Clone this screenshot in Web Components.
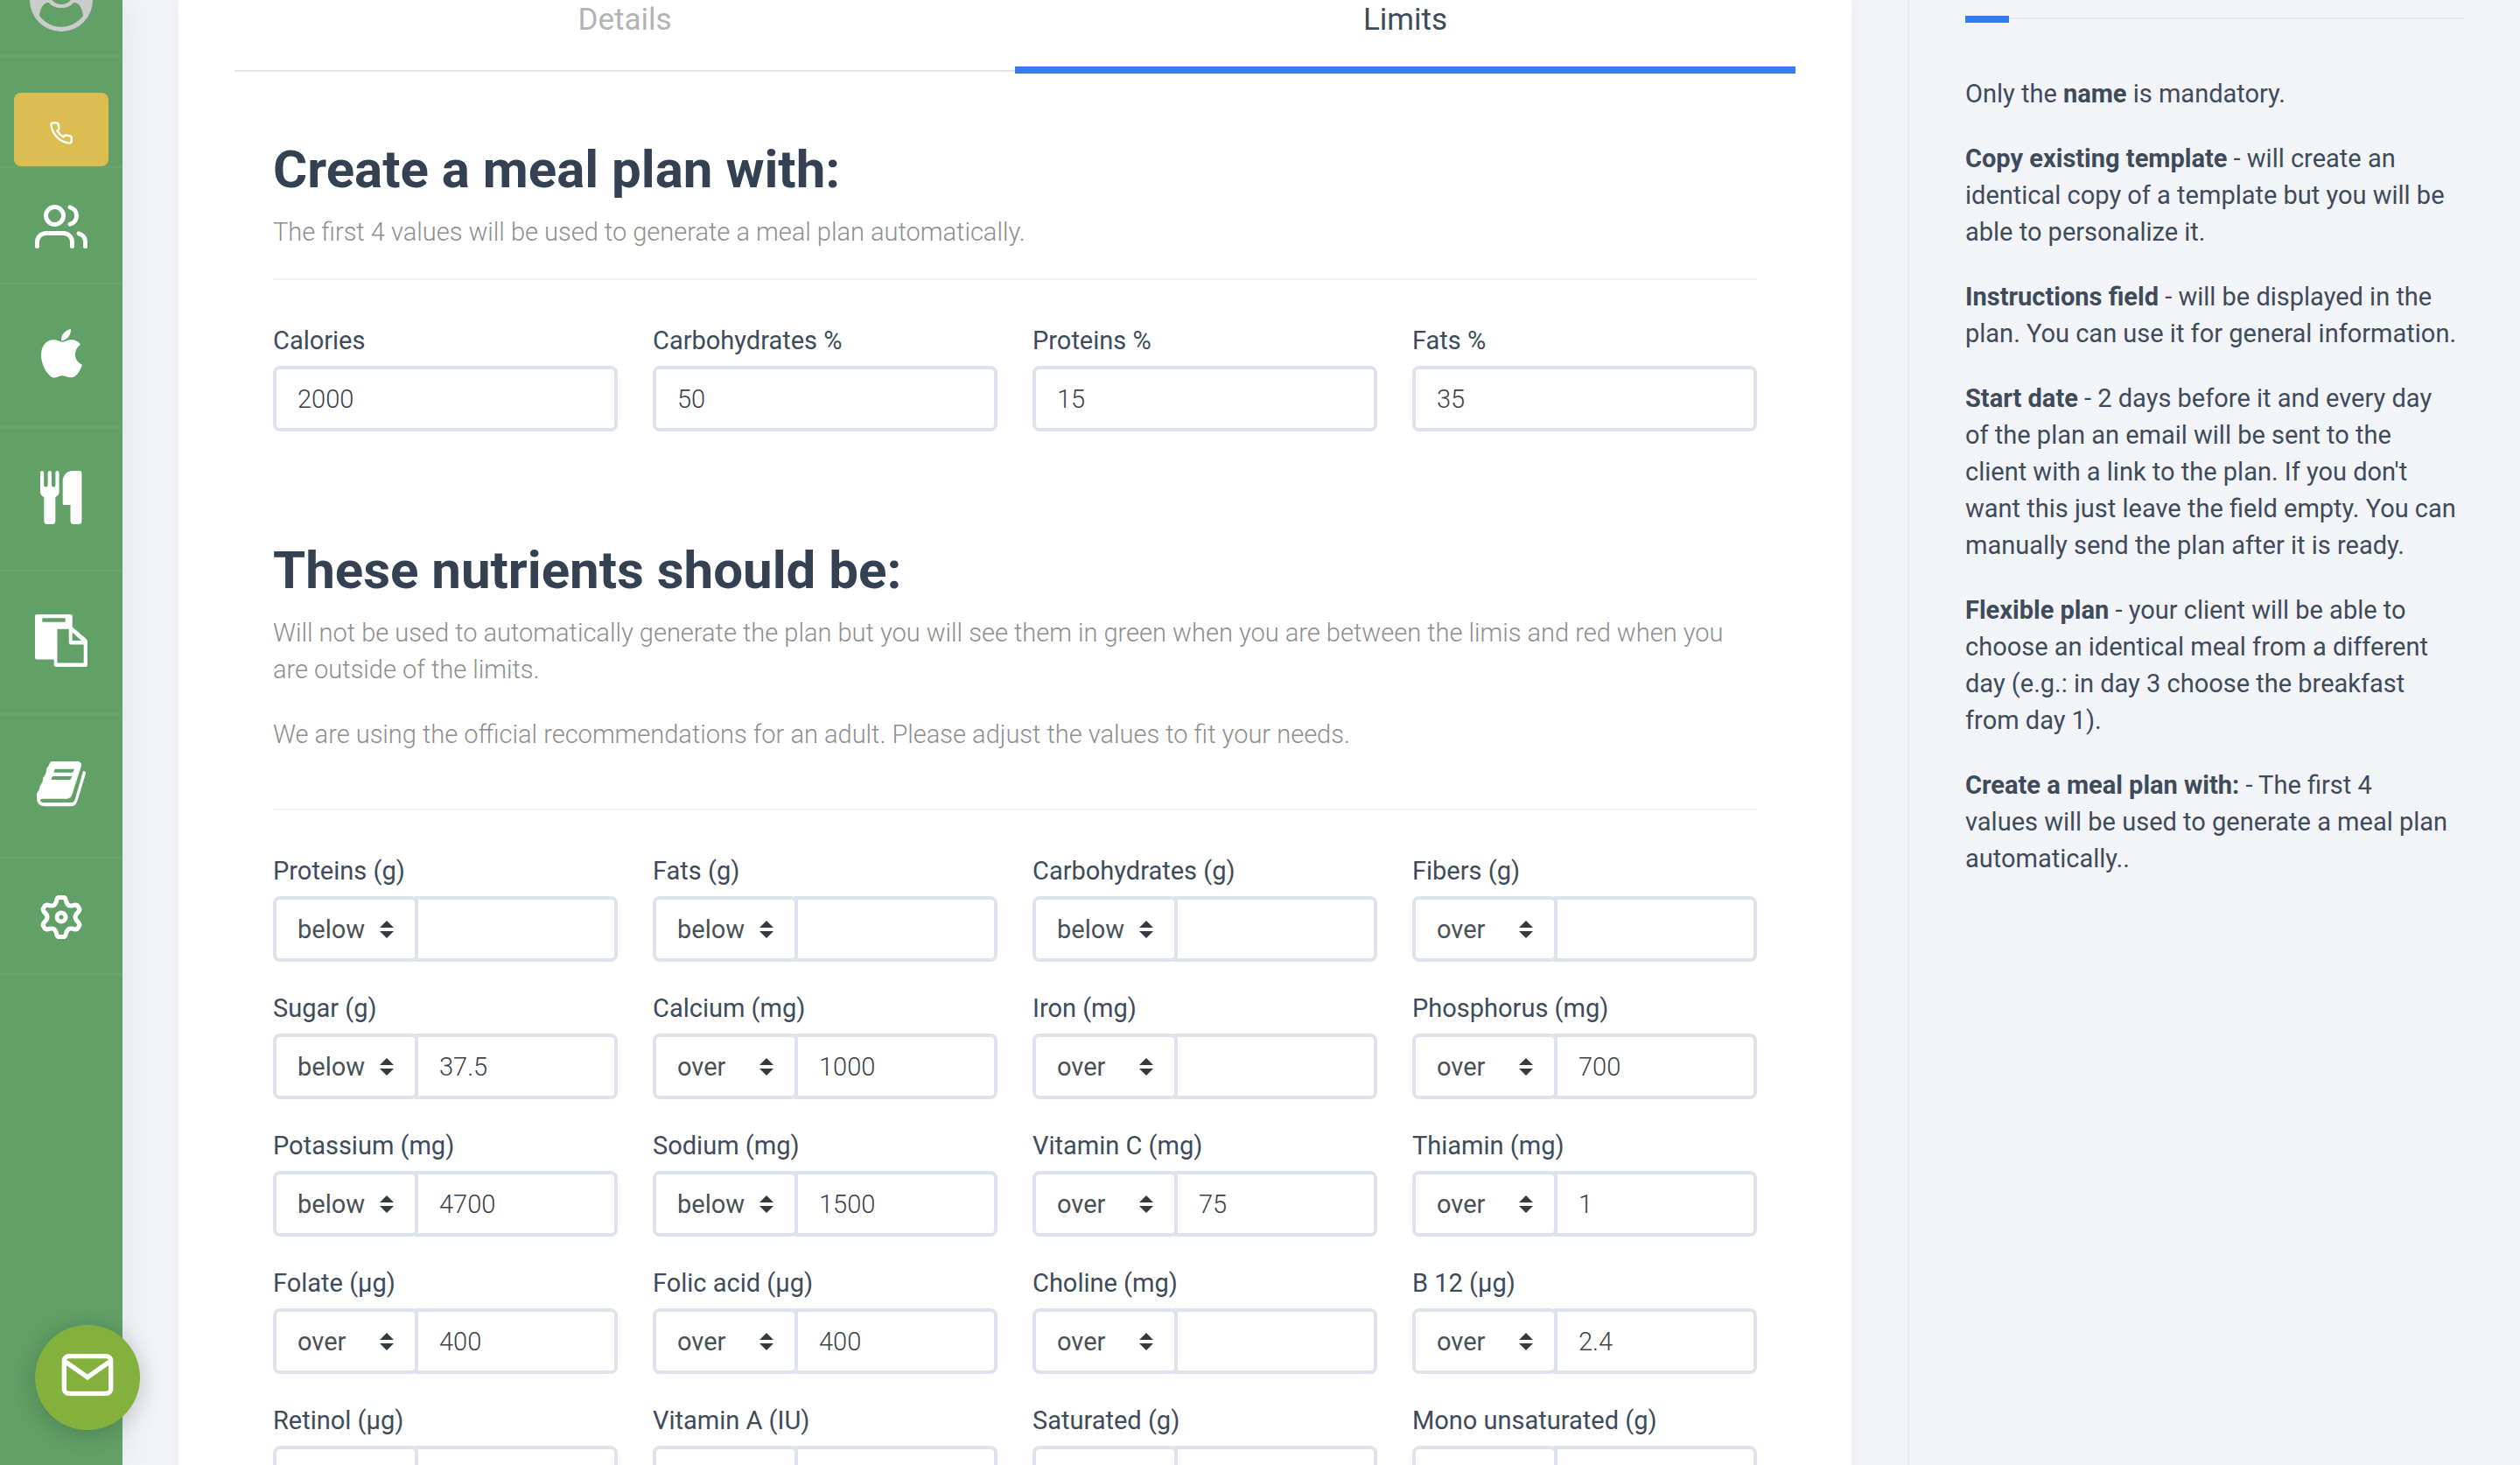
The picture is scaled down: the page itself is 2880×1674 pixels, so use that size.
<!DOCTYPE html>
<html lang="en">
<head>
<meta charset="utf-8">
<title>Meal plan limits</title>
<style>
  body { margin: 0; background: #f3f4f8; color: #3e4b5b; font: 400 29px/42px Roboto, "Liberation Sans", sans-serif; }
</style>
</head>
<body>
<plan-app>
  <side-menu slot="menu"></side-menu>
  <plan-card>
    <form-section heading="Create a meal plan with:">
      <p slot="intro">The first 4 values will be used to generate a meal plan automatically.</p>
      <value-field label="Calories" value="2000"></value-field>
      <value-field label="Carbohydrates %" value="50"></value-field>
      <value-field label="Proteins %" value="15"></value-field>
      <value-field label="Fats %" value="35"></value-field>
    </form-section>
    <form-section heading="These nutrients should be:" spaced>
      <p slot="intro">Will not be used to automatically generate the plan but you will see them in green when you are between the limis and red when you are outside of the limits.</p>
      <p slot="intro">We are using the official recommendations for an adult. Please adjust the values to fit your needs.</p>
      <limit-field label="Proteins (g)" rule="below"></limit-field>
      <limit-field label="Fats (g)" rule="below"></limit-field>
      <limit-field label="Carbohydrates (g)" rule="below"></limit-field>
      <limit-field label="Fibers (g)" rule="over"></limit-field>
      <limit-field label="Sugar (g)" rule="below" value="37.5"></limit-field>
      <limit-field label="Calcium (mg)" rule="over" value="1000"></limit-field>
      <limit-field label="Iron (mg)" rule="over"></limit-field>
      <limit-field label="Phosphorus (mg)" rule="over" value="700"></limit-field>
      <limit-field label="Potassium (mg)" rule="below" value="4700"></limit-field>
      <limit-field label="Sodium (mg)" rule="below" value="1500"></limit-field>
      <limit-field label="Vitamin C (mg)" rule="over" value="75"></limit-field>
      <limit-field label="Thiamin (mg)" rule="over" value="1"></limit-field>
      <limit-field label="Folate (µg)" rule="over" value="400"></limit-field>
      <limit-field label="Folic acid (µg)" rule="over" value="400"></limit-field>
      <limit-field label="Choline (mg)" rule="over"></limit-field>
      <limit-field label="B 12 (µg)" rule="over" value="2.4"></limit-field>
      <limit-field label="Retinol (µg)" rule="over"></limit-field>
      <limit-field label="Vitamin A (IU)" rule="over"></limit-field>
      <limit-field label="Saturated (g)" rule="below"></limit-field>
      <limit-field label="Mono unsaturated (g)" rule="over"></limit-field>
    </form-section>
  </plan-card>
  <help-panel slot="help">
    <p>Only the <b>name</b> is mandatory.</p>
    <p><b>Copy existing template</b> - will create an identical copy of a template but you will be able to personalize it.</p>
    <p><b>Instructions field</b> - will be displayed in the plan. You can use it for general information.</p>
    <p><b>Start date</b> - 2 days before it and every day<br>of the plan an email will be sent to the<br>client with a link to the plan. If you don't<br>want this just leave the field empty. You can manually send the plan after it is ready.</p>
    <p><b>Flexible plan</b> - your client will be able to choose an identical meal from a different day (e.g.: in day 3 choose the breakfast from day 1).</p>
    <p><b>Create a meal plan with:</b> - The first 4<br>values will be used to generate a meal plan automatically..</p>
  </help-panel>
  <mail-button slot="chat"></mail-button>
</plan-app>

<script>
class Base extends HTMLElement {
  connectedCallback() {
    if (this.shadowRoot) return;
    this.attachShadow({ mode: 'open' }).innerHTML =
      '<style>*{box-sizing:border-box}:host{display:block}</style>' + this.render();
  }
  attr(name) { return this.getAttribute(name) || ''; }
}

customElements.define('plan-app', class extends Base {
  render() {
    return `<style>
      :host { display: flex; height: 100vh; overflow: hidden; }
      main { flex: 1; min-width: 0; padding: 0 64px; }
      .chat { position: fixed; left: 40px; bottom: 40px; z-index: 2; }
    </style>
    <slot name="menu"></slot>
    <main><slot></slot></main>
    <slot name="help"></slot>
    <div class="chat"><slot name="chat"></slot></div>`;
  }
});

customElements.define('side-menu', class extends Base {
  render() {
    return `<style>
      :host { flex: none; width: 140px; background: #61a067; box-shadow: 0 0 40px rgba(69,81,100,.1); z-index: 1; }
      nav { display: flex; flex-direction: column; }
      a { display: flex; align-items: center; justify-content: center; height: 164px; padding-bottom: 4px;
          border-bottom: 2px solid #67a56d; color: #fff; }
      svg { display: block; fill: currentColor; }
      .line { fill: none; stroke: currentColor; stroke-width: 2; stroke-linecap: round; stroke-linejoin: round; }
      .me { height: 65px; align-items: flex-start; color: #ccc; }
      .call { height: 127px; align-items: flex-end; padding: 0 16px; }
      .call span { flex: 1; display: flex; align-items: center; justify-content: center; height: 84px; padding-top: 8px;
          border-radius: 8px; background: #dcbd52; }
      .short { height: 133px; padding: 2px 0 0; }
    </style>
    <nav aria-label="Main">
      <a class="me" href="#me" aria-label="Account"><svg width="72" height="36" viewBox="0 0 72 36">
        <circle cx="36" cy="0" r="36"/>
        <path fill="#61a067" d="M11 18C12 9 16 2 22 3C28 11 44 11 50 3C56 2 60 9 61 18C48 35 24 35 11 18Z"/>
        <circle cx="36" cy="-9" r="14" fill="#61a067"/></svg></a>
      <a class="call" href="#call" aria-label="Call"><span><svg class="line" width="28" height="28" viewBox="0 0 24 24"><path d="M22 16.92v3a2 2 0 0 1-2.18 2 19.79 19.79 0 0 1-8.63-3.07 19.5 19.5 0 0 1-6-6 19.79 19.79 0 0 1-3.07-8.67A2 2 0 0 1 4.11 2h3a2 2 0 0 1 2 1.72 12.84 12.84 0 0 0 .7 2.81 2 2 0 0 1-.45 2.11L8.09 9.91a16 16 0 0 0 6 6l1.27-1.27a2 2 0 0 1 2.11-.45 12.84 12.84 0 0 0 2.81.7A2 2 0 0 1 22 16.92z"/></svg></span></a>
      <a class="short" href="#clients" aria-label="Clients"><svg class="line" width="60" height="60" viewBox="0 0 24 24"><path d="M17 21v-2a4 4 0 0 0-4-4H5a4 4 0 0 0-4 4v2"/><circle cx="9" cy="7" r="4"/><path d="M23 21v-2a4 4 0 0 0-3-3.87M16 3.13a4 4 0 0 1 0 7.75"/></svg></a>
      <a href="#foods" aria-label="Foods"><svg width="47" height="56" viewBox="138 1124 141 168"><path d="M180 1161C195 1161 200 1168 211 1168C222 1168 228 1161 242 1161C255 1161 266 1167 273 1177C262 1184 255 1197 255 1212C255 1228 264 1240 279 1246C273 1264 264 1278 254 1286C244 1293 230 1289 222 1286C214 1283 205 1283 198 1287C188 1292 178 1292 170 1286C152 1270 138 1242 138 1212C138 1182 157 1161 180 1161Z"/><path d="M240 1124C241 1145 226 1163 207 1164C206 1143 221 1127 240 1124Z"/></svg></a>
      <a href="#recipes" aria-label="Recipes"><svg width="48" height="61" viewBox="0 0 48 61"><path d="M0 2.2A2.1 2.1 0 0 1 4.2 2.2V16.3A2.2 2.2 0 0 0 8.6 16.3V2.2A2.2 2.2 0 0 1 13 2.2V16.3A2.2 2.2 0 0 0 17.4 16.3V2.2A2.1 2.1 0 0 1 21.6 2.2V24C21.6 27 20 29 17.3 30V57C17.3 60 16 61 13.5 61H8C5.500 61 4.300 60 4.300 57V30C1.600 29 0 27 0 24Z"/><path d="M37 0H45C46.600 0 47.400 1 47.400 2.500V57C47.400 60 46 61 43.500 61H38.500C36 61 34.500 60 34.500 57V39H27C26 39 25.700 38.600 25.700 37.800V12C25.700 5 30 0 37 0Z"/></svg></a>
      <a href="#templates" aria-label="Templates"><svg width="60" height="60" viewBox="0 0 60 60"><path fill-rule="evenodd" d="M2 0H40.700Q42.700 0 42.700 2V14.600L58.500 28Q60 29.500 60 31.600V57.500Q60 60 57.500 60H24Q21.700 60 21.700 57.500V51.400H2Q0 51.400 0 49.400V2Q0 0 2 0ZM9.300 4.300Q8.300 4.300 8.300 5.300V7.700Q8.300 8.700 9.300 8.700H33.700Q34.700 8.700 34.700 7.700V5.300Q34.700 4.300 33.700 4.300ZM25.500 16.800V55.600H55.700V34.400H41Q38.700 34.400 38.700 32V16.800ZM42.700 20.600V30H53Z"/></svg></a>
      <a href="#library" aria-label="Library"><svg width="56" height="52" viewBox="0 0 56 52"><path fill-rule="evenodd" d="M18 0H47Q52 1 50.700 6L40.500 37.500Q39 42.500 34.500 42.700H7Q4 42.700 4 44.500Q4.500 47 8 47H40Q42.700 47 43.500 44.300L53 11Q57 11 55.600 15L46.500 45Q44.500 51.300 39.500 51.300H9Q0 50.500 0 42V37Q3 33 4 27.500Q7 24 7.500 18Q11 15 11.300 8Q14 5 15 1.500Q16 0 18 0ZM21.500 8.700Q20 9 19.500 12.700H41Q42.500 12 42.700 8.700ZM18.500 17Q17 17.500 16.500 21H38Q39.500 20.500 40 17Z"/></svg></a>
      <a class="short" href="#settings" aria-label="Settings"><svg class="line" style="stroke-width:5" width="48" height="52" viewBox="-24 -26 48 52"><path d="M-3.500 -22.500H3.500Q4.500 -22 5 -20.500Q6 -15 8.700 -13.300Q11 -12.600 16.500 -14Q18 -14 18.800 -13L21 -9Q21 -7.500 20 -6.500Q16 -3 16 0Q16 3 20 6.500Q21 7.500 21 9L18.800 13Q18 14 16.500 14Q11 12.600 8.700 13.300Q6 15 5 20.500Q4.500 22 3.500 22.500H-3.500Q-4.500 22 -5 20.500Q-6 15 -8.700 13.300Q-11 12.600 -16.500 14Q-18 14 -18.800 13L-21 9Q-21 7.500 -20 6.500Q-16 3 -16 0Q-16 -3 -20 -6.500Q-21 -7.500 -21 -9L-18.800 -13Q-18 -14 -16.500 -14Q-11 -12.600 -8.700 -13.300Q-6 -15 -5 -20.500Q-4.500 -22 -3.500 -22.500Z"/><circle r="5"/></svg></a>
    </nav>`;
  }
});

customElements.define('mail-button', class extends Base {
  render() {
    return `<style>
      button { display: flex; align-items: center; justify-content: center; width: 120px; height: 120px; padding: 0 0 6px;
        border: 0; border-radius: 50%; background: #84b13d; color: #fff; box-shadow: 0 4px 28px rgba(0,0,0,.2); }
    </style>
    <button type="button" aria-label="Send a message"><svg width="64" height="64" viewBox="0 0 24 24" fill="none" stroke="currentColor" stroke-width="2" stroke-linejoin="round"><path d="M4 4h16c1.100 0 2 .9 2 2v12c0 1.100-.9 2-2 2H4c-1.100 0-2-.9-2-2V6c0-1.100.9-2 2-2z"/><path stroke-linejoin="miter" d="M22 6l-10 7L2 6"/></svg></button>`;
  }
});

customElements.define('plan-card', class extends Base {
  render() {
    return `<style>
      :host { background: #fff; padding: 0 64px 64px; box-shadow: 0 0 12px rgba(69,101,173,.06); }
      .tabs { display: grid; grid-template-columns: 1fr 1fr; border-bottom: 2px solid #e5e5e5; }
      button { position: relative; height: 80px; padding: 0 0 34px; border: 0; background: none;
        font: inherit; font-size: 35px; line-height: 46px; color: #b3b3b3; }
      button[aria-selected=true] { color: #3e4b5b; }
      button[aria-selected=true]::after { content: ""; position: absolute; left: 0; right: 0; bottom: -4px; height: 8px; background: #347af0; }
      .panel { padding: 78px 44px 0; }
    </style>
    <div class="tabs" role="tablist">
      <button type="button" role="tab" aria-selected="false">Details</button>
      <button type="button" role="tab" aria-selected="true">Limits</button>
    </div>
    <div class="panel" role="tabpanel"><slot></slot></div>`;
  }
});

customElements.define('form-section', class extends Base {
  render() {
    return `<style>
      :host([spaced]) { margin-top: 125px; }
      h2 { margin: 0 0 16px; font-size: 60px; line-height: 68px; font-weight: 700; color: #334152; }
      .intro { display: flex; flex-direction: column; gap: 32px; padding-bottom: 32px; border-bottom: 2px solid #f2f2f2; }
      :host([spaced]) .intro { padding-bottom: 64px; }
      ::slotted(p) { margin: 0; font-weight: 300; color: #8e8e8e; }
      .fields { display: grid; grid-template-columns: repeat(4, 1fr); gap: 32px 40px; margin-top: 48px; }
    </style>
    <h2>${this.attr('heading')}</h2>
    <div class="intro"><slot name="intro"></slot></div>
    <div class="fields"><slot></slot></div>`;
  }
});

const fieldStyle = `
  label { display: block; margin-bottom: 8px; }
  input, select { display: block; height: 75px; margin: 0; padding: 0 24px; border: 4px solid #dde2ec; border-radius: 8px;
    background: #fff; color: #495057; font: inherit; }
  input { width: 100%; min-width: 0; font-weight: 300; color: #3c4248; }`;

customElements.define('value-field', class extends Base {
  render() {
    return `<style>${fieldStyle}</style>
    <label for="value">${this.attr('label')}</label>
    <input id="value" value="${this.attr('value')}">`;
  }
});

customElements.define('limit-field', class extends Base {
  render() {
    const option = name => `<option${this.attr('rule') === name ? ' selected' : ''}>${name}</option>`;
    return `<style>${fieldStyle}
      .group { display: flex; }
      .pick { position: relative; flex: none; width: 166px; }
      select { width: 100%; appearance: none; }
      .pick svg { position: absolute; right: 28px; top: 28px; fill: #343a40; pointer-events: none; }
      input { flex: 1; margin-left: -4px; border-radius: 0 8px 8px 0; position: relative; }
    </style>
    <label for="value">${this.attr('label')}</label>
    <div class="group">
      <div class="pick">
        <select aria-label="${this.attr('label')} rule">${option('below')}${option('over')}</select>
        <svg width="16" height="20" viewBox="0 0 16 20"><path d="M8 0L16 8H0ZM0 12H16L8 20Z"/></svg>
      </div>
      <input id="value" value="${this.attr('value')}">
    </div>`;
  }
});

customElements.define('help-panel', class extends Base {
  render() {
    return `<style>
      :host { flex: none; width: 700px; box-sizing: border-box; padding: 18px 64px 0; border-left: 2px solid #e7e9ee; }
      .rule { display: flex; align-items: center; height: 8px; }
      .rule::before { content: ""; width: 50px; height: 8px; background: #347af0; }
      .rule::after { content: ""; flex: 1; height: 2px; margin-bottom: 2px; background: #e7e9ee; }
      .text { display: flex; flex-direction: column; gap: 32px; padding-top: 60px; }
      ::slotted(p) { margin: 0; }
    </style>
    <div class="rule"></div>
    <div class="text"><slot></slot></div>`;
  }
});
</script>
</body>
</html>
